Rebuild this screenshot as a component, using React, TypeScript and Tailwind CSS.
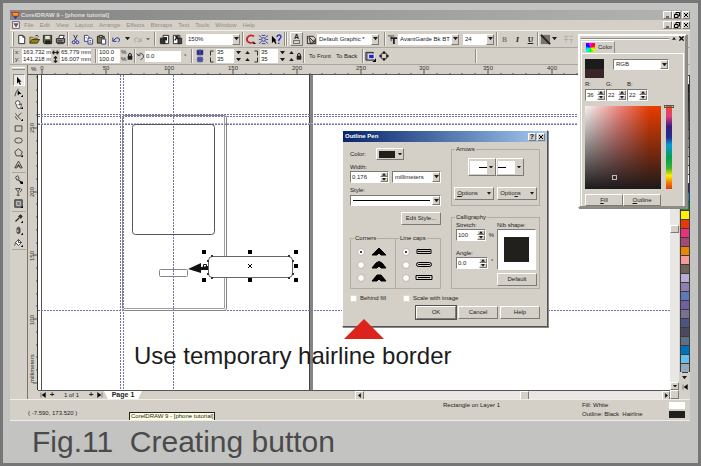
import { useState } from "react";
import type { ReactNode } from "react";
import clsx from "clsx";

const menus = ["File", "Edit", "View", "Layout", "Arrange", "Effects", "Bitmaps", "Text", "Tools", "Window", "Help"];

const palette = [
  "#ffffff", "#1b1b1b", "#262626", "#343434", "#474747", "#5c5c5c", "#757575", "#8f8f8f", "#ababab", "#c6c6c6", "#e2e2e2",
  "#ffffff", "#2b1f6e", "#2b7fc0", "#128a43", "#fff100", "#e23a08", "#ec2f7b", "#a14a78", "#ee8300", "#f39b96", "#6f6259",
  "#b9add4", "#8f80b4", "#6078b8", "#71609f", "#7b6f96", "#4a5680", "#4c4860", "#5f6f88", "#0072bc", "#62bdf0", "#93abba",
];

const raised = "border border-t-white border-l-white border-r-[#7d7a74] border-b-[#7d7a74] bg-[#d4d0c8]";
const sunken = "border border-t-[#7d7a74] border-l-[#7d7a74] border-r-white border-b-white bg-white";

function Icon({ children, className = "size-[11px]" }: { children: ReactNode; className?: string }) {
  return (
    <svg viewBox="0 0 12 12" className={clsx("shrink-0", className)} fill="none" stroke="#222" strokeWidth="1" aria-hidden="true">
      {children}
    </svg>
  );
}

function Tri({ up = false, className = "w-[5px]" }: { up?: boolean; className?: string }) {
  return (
    <svg viewBox="0 0 6 4" className={clsx("shrink-0", className)} aria-hidden="true">
      <path d={up ? "M0 4L3 0L6 4Z" : "M0 0H6L3 4Z"} fill="currentColor" />
    </svg>
  );
}

function ToolButton({ label, children }: { label: string; children: ReactNode }) {
  return (
    <button aria-label={label} className="flex h-[13px] w-[13px] shrink-0 items-center justify-center">
      {children}
    </button>
  );
}

function Divider() {
  return <span className="h-[14px] w-[2px] shrink-0 border-l border-[#8f8c86] bg-[#f3f1ec]" />;
}

type ComboProps = { label: string; options: string[]; className?: string; flat?: boolean };

function Combo({ label, options, className, flat }: ComboProps) {
  return (
    <div className={clsx("relative shrink-0", flat ? "bg-white" : sunken, className)}>
      <select aria-label={label} className="block h-full w-full appearance-none truncate pl-[2px] pr-[8px] outline-none">
        {options.map((option) => (
          <option key={option}>{option}</option>
        ))}
      </select>
      <span className={clsx("pointer-events-none absolute inset-y-0 right-0 flex w-[8px] items-center justify-center", raised)}>
        <Tri />
      </span>
    </div>
  );
}

function Spinner({ id, value, className }: { id: string; value: string; className?: string }) {
  return (
    <div className={clsx("flex h-[12px]", sunken, className)}>
      <input id={id} defaultValue={value} className="w-0 min-w-0 flex-1 pl-px outline-none" />
      <span className="flex w-[8px] flex-col">
        <button aria-label={`Increase ${id}`} className={clsx("flex flex-1 items-center justify-center", raised)}>
          <Tri up className="w-[4px]" />
        </button>
        <button aria-label={`Decrease ${id}`} className={clsx("flex flex-1 items-center justify-center", raised)}>
          <Tri className="w-[4px]" />
        </button>
      </span>
    </div>
  );
}

function WindowButtons() {
  return (
    <div className="ml-auto flex">
      <button aria-label="Minimize" className={clsx("flex h-[8px] w-[9px] items-center justify-center", raised)}>
        <Icon className="size-[6px]">
          <path d="M2 10H8" stroke="#000" strokeWidth="2" />
        </Icon>
      </button>
      <button aria-label="Restore" className={clsx("flex h-[8px] w-[9px] items-center justify-center", raised)}>
        <Icon className="size-[6px]">
          <path d="M4 4V1H11V8H8M1 5H8V11H1Z" stroke="#000" strokeWidth="2" />
        </Icon>
      </button>
      <button aria-label="Close" className={clsx("ml-px flex h-[8px] w-[8px] items-center justify-center", raised)}>
        <Icon className="size-[6px]">
          <path d="M2 2L10 10M10 2L2 10" stroke="#000" strokeWidth="2" />
        </Icon>
      </button>
    </div>
  );
}

function StandardBar() {
  return (
    <div className="flex h-[18px] items-center border-t border-b border-t-[#f3f1ec] border-b-[#aaa79f] pl-[2px]">
      <span className="mr-px h-[14px] w-[2px] border-x border-l-white border-r-[#8f8c86]" />
      <ToolButton label="New">
        <Icon>
          <path d="M3 1.500H7.500L9.500 3.500V10.500H3Z" fill="#fff" />
          <path d="M7.500 1.500V3.500H9.500" />
        </Icon>
      </ToolButton>
      <ToolButton label="Open">
        <Icon>
          <path d="M1 10V3.500H4L5 4.500H9V6" fill="#d8cf5a" stroke="#5a5418" />
          <path d="M1 10L3 6H11.500L9 10Z" fill="#8b8420" stroke="#3c3810" />
          <path d="M7 2Q9 0.500 10.500 3" />
        </Icon>
      </ToolButton>
      <ToolButton label="Save">
        <Icon>
          <path d="M1.500 1.500H10.500V10.500H2.500L1.500 9.500Z" fill="#5f6438" />
          <path d="M3.500 2H8.500V5.500H3.500Z" fill="#e6e4d8" stroke="none" />
          <path d="M4 7.500H9V10.500H4Z" fill="#222" />
        </Icon>
      </ToolButton>
      <ToolButton label="Print">
        <Icon>
          <path d="M4 5L5 1.500H10L9 5" fill="#fff" />
          <path d="M1.500 5H10.500V9.500H1.500Z" fill="#8d8b85" />
          <path d="M2.500 10.500H9.500M3 7.500H8" />
        </Icon>
      </ToolButton>
      <Divider />
      <ToolButton label="Cut">
        <Icon>
          <path d="M4 1L7 7M8 1L5 7" stroke="#26265e" />
          <circle cx="4" cy="9" r="1.600" stroke="#26269a" />
          <circle cx="8" cy="9" r="1.600" stroke="#26269a" />
        </Icon>
      </ToolButton>
      <ToolButton label="Copy">
        <Icon>
          <path d="M1.500 1.500H5L6.500 3V8H1.500Z" fill="#fff" stroke="#333a7c" />
          <path d="M5.500 4.500H9L10.500 6V11H5.500Z" fill="#fff" stroke="#333a7c" />
          <path d="M7 7H9M7 9H9M3 4H4" stroke="#333a7c" />
        </Icon>
      </ToolButton>
      <ToolButton label="Paste">
        <Icon>
          <path d="M1.500 2.500H9V10H1.500Z" fill="#7b7738" />
          <path d="M3.500 1.500H7V3.500H3.500Z" fill="#ddd" />
          <path d="M6 5.500H10.500V11H6Z" fill="#fff" stroke="#333a7c" />
        </Icon>
      </ToolButton>
      <Divider />
      <ToolButton label="Undo">
        <Icon>
          <path d="M2 4V8H6" stroke="#26268a" />
          <path d="M2.500 7.500Q6 2.500 9 5Q10 7 8 9" stroke="#26268a" />
        </Icon>
      </ToolButton>
      <button aria-label="Undo history" className="flex w-[8px] justify-center">
        <Tri />
      </button>
      <ToolButton label="Redo">
        <Icon>
          <path d="M10 4V8H6" stroke="#a5a29b" />
          <path d="M9.500 7.500Q6 2.500 3 5Q2 7 4 9" stroke="#a5a29b" />
        </Icon>
      </ToolButton>
      <button aria-label="Redo history" className="flex w-[8px] justify-center text-[#77746e]">
        <Tri className="w-[4px]" />
      </button>
      <span className="ml-[2px] mr-[2px] flex">
        <Divider />
      </span>
      <ToolButton label="Import">
        <Icon>
          <path d="M4.500 1.500H10.500V10.500H4.500Z" fill="#fff" />
          <path d="M1.500 4.500H6.500V10.500H1.500Z" fill="#333" />
          <path d="M5 4H8V7M8 4L5 7" strokeWidth="1.500" />
        </Icon>
      </ToolButton>
      <ToolButton label="Export">
        <Icon>
          <path d="M1.500 1.500H8.500V10.500H1.500Z" fill="#fff" />
          <path d="M6.500 4.500H10.500V10.500H6.500Z" fill="#444" />
          <path d="M3 7L6 3M3.500 3H6.500V6" strokeWidth="1.500" />
        </Icon>
      </ToolButton>
      <Combo flat label="Zoom level" options={["150%", "100%", "200%"]} className="ml-[2px] mr-[2px] h-[11px] w-[54px]" />
      <Divider />
      <ToolButton label="Application launcher">
        <Icon>
          <path d="M10 2.500Q5 0 2.500 4Q1 8 5 9.500Q7 10 9 9" stroke="#c8252c" strokeWidth="2" />
          <path d="M9 8L12 11H9Z" fill="#000" stroke="none" />
        </Icon>
      </ToolButton>
      <ToolButton label="Corel Online">
        <Icon>
          <circle cx="6" cy="6" r="2" stroke="#2a3aa0" />
          <path d="M1 1.500L4 4M11 1.500L8 4M1 10.500L4 8M11 10.500L8 8M1 6H3M9 6H11M4 1.500H8M4 10.500H8" stroke="#2a3aa0" />
        </Icon>
      </ToolButton>
      <ToolButton label="What's this">
        <Icon>
          <path d="M1 2V10L3 8L5 11L6 10L4.500 7H6Z" fill="#000" stroke="none" />
          <path d="M6.500 3.500Q7 1 9 1Q11.500 1.500 10.500 4L8.500 6.500V8M8.500 9.500V11" stroke="#2a2ac0" strokeWidth="1.500" />
        </Icon>
      </ToolButton>
      <span className="ml-px mr-[2px] flex">
        <Divider />
        <Divider />
      </span>
      <button aria-label="Artistic text" className={clsx("mr-[3px] flex h-[14px] w-[13px] flex-col items-center text-[7px] font-bold leading-[7px]", raised)}>
        A
        <span className="h-[4px] w-[7px] border border-[#77746e]" />
      </button>
      <Icon>
        <path d="M1.500 2V10.500H6M3 2.500H8L10.500 5V10.500H5Z" />
        <path d="M4 4L9 9V6M9 9H6" />
      </Icon>
      <Combo flat label="Style list" options={["Default Graphic *"]} className="mr-[5px] h-[11px] w-[62px]" />
      <Divider />
      <Icon className="ml-px size-[11px]">
        <path d="M1 2H8M4.500 2V8" strokeWidth="2" stroke="#888" />
        <path d="M4 4.500H11M7.500 4.500V11" strokeWidth="2" />
      </Icon>
      <Combo flat label="Font list" options={["AvantGarde Bk BT", "Arial"]} className="mr-[4px] h-[11px] w-[61px]" />
      <Combo flat label="Font size" options={["24", "36"]} className="mr-[2px] h-[11px] w-[31px]" />
      <Divider />
      <button className="w-[13px] text-center font-serif text-[8px] font-bold text-[#85827b]">B</button>
      <button className="w-[13px] text-center font-serif text-[8px] font-bold italic">I</button>
      <button className="w-[13px] text-center font-serif text-[8px] font-bold underline">U</button>
      <Divider />
      <ToolButton label="Text alignment">
        <Icon>
          <path d="M1 1H11V11H1Z" fill="#77746e" stroke="none" />
          <path d="M1 1L11 11" strokeWidth="2" />
        </Icon>
      </ToolButton>
      <Tri />
      <span className="ml-[6px]">
        <Icon>
          <path d="M1 2.500H6M3.500 2.500V9M7 2.500H11M7 6H11M1 6H6M9 6V10" stroke="#b0ada6" />
        </Icon>
      </span>
    </div>
  );
}

function PairInput({ label, value, width }: { label: string; value: string; width: string }) {
  return <input aria-label={label} defaultValue={value} className={clsx("h-[7px] bg-white pl-px leading-[7px] outline-none", width)} />;
}

function CornerRow({ a, b, name }: { a: string; b: string; name: string }) {
  return (
    <div className="flex h-[7px] items-center">
      <Icon className="size-[6px]">
        <path d={a} stroke="#333" strokeWidth="2" />
      </Icon>
      <PairInput label={`${name} left corner`} value="35" width="ml-px w-[18px]" />
      <span className="ml-[2px] mr-[3px] flex gap-[4px]">
        <Tri />
        <Tri up />
      </span>
      <Icon className="size-[6px]">
        <path d={b} stroke="#333" strokeWidth="2" />
      </Icon>
      <PairInput label={`${name} right corner`} value="35" width="ml-px w-[18px]" />
      <span className="ml-[2px] flex gap-[4px]">
        <Tri />
        <Tri up />
      </span>
    </div>
  );
}

function Lock() {
  return (
    <Icon className="size-[8px]">
      <path d="M4 6V3Q6 1 8 3V6" strokeWidth="1.500" />
      <path d="M3 6H9V11H3Z" fill="#222" />
    </Icon>
  );
}

function PropertyBar() {
  return (
    <div className="flex h-[17px] items-center border-b border-[#aaa79f] pl-[2px]">
      <span className="mr-px h-[14px] w-[2px] border-x border-l-white border-r-[#8f8c86]" />
      <div className="grid w-[7px] leading-[7px]">
        <span>x:</span>
        <span>y:</span>
      </div>
      <div className="grid">
        <PairInput label="x position" value="163.732 mm" width="w-[29px]" />
        <PairInput label="y position" value="141.218 mm" width="w-[29px]" />
      </div>
      <div className="grid w-[9px] justify-items-center">
        <Icon className="size-[7px]">
          <path d="M1 6H11M4 3L1 6L4 9M8 3L11 6L8 9" strokeWidth="2" />
        </Icon>
        <Icon className="size-[7px]">
          <path d="M6 1V11M3 4L6 1L9 4M3 8L6 11L9 8" strokeWidth="2" />
        </Icon>
      </div>
      <div className="mr-[4px] grid">
        <PairInput label="Object width" value="65.779 mm" width="w-[31px]" />
        <PairInput label="Object height" value="16.007 mm" width="w-[31px]" />
      </div>
      <Divider />
      <div className="ml-px grid">
        <PairInput label="Horizontal scale" value="100.0" width="w-[22px]" />
        <PairInput label="Vertical scale" value="100.0" width="w-[22px]" />
      </div>
      <div className="grid w-[6px] pl-px leading-[7px]">
        <span>%</span>
        <span>%</span>
      </div>
      <Lock />
      <Divider />
      <Icon className="size-[9px]">
        <path d="M3 4Q6 0 9 3Q12 8 6 10M1 2L3 5L6 4" />
      </Icon>
      <input aria-label="Rotation" defaultValue="0.0" className="h-[11px] w-[36px] bg-white pl-px outline-none" />
      <span className="w-[10px] pl-[3px]">°</span>
      <Divider />
      <div className="ml-[2px] mr-[4px] grid">
        <Icon className="h-[7px] w-[10px]">
          <path d="M1 2H5V10H1ZM7 2H11V10H7Z" fill="#26269a" stroke="#26268a" />
          <path d="M6 0V12" />
        </Icon>
        <Icon className="h-[7px] w-[10px]">
          <path d="M0 6H12M2 2H10V5H2ZM2 7H10V10H2Z" fill="#6a6ab0" stroke="#26268a" />
        </Icon>
      </div>
      <div className="mr-px grid">
        <CornerRow name="Top" a="M3 11V2H9" b="M3 2H9V11" />
        <CornerRow name="Bottom" a="M3 1V10H9" b="M3 10H9V1" />
      </div>
      <Lock />
      <Divider />
      <button className="ml-[4px] whitespace-nowrap">To Front</button>
      <button className="ml-[5px] mr-[5px] whitespace-nowrap">To Back</button>
      <Divider />
      <ToolButton label="Wrap text">
        <Icon>
          <path d="M1 1.500H9V10H1Z" fill="#8d9097" />
          <path d="M4 3.500H10V8.500H4Z" fill="#2222c8" stroke="#fff" />
          <path d="M12 8V12H8Z" fill="#000" stroke="none" />
        </Icon>
      </ToolButton>
      <ToolButton label="Convert to curves">
        <Icon className="size-[10px]">
          <circle cx="6" cy="6" r="4" />
          <path d="M5 1H7V3H5ZM5 9H7V11H5ZM1 5H3V7H1ZM9 5H11V7H9Z" fill="#222" />
        </Icon>
      </ToolButton>
      <span className="ml-[85px] flex">
        <Divider />
      </span>
    </div>
  );
}

const flyout = <path d="M12 9V12H9Z" fill="#000" stroke="none" />;

const tools: { name: string; art: ReactNode; group?: boolean }[] = [
  { name: "Pick", art: <path d="M4 1V10L6 8L8 12L9 11L7.500 7.500H10Z" fill="#000" stroke="none" /> },
  { name: "Shape", art: <><path d="M1 11Q3 3 6 1" /><path d="M5 3L10 8L7 8L5 10Z" fill="#000" stroke="none" />{flyout}</> },
  { name: "Zoom", art: <><circle cx="5" cy="4" r="3" fill="#fff" /><path d="M3 7L5 11H9L10 5L7 7" fill="#fff" />{flyout}</> },
  { name: "Freehand", art: <><path d="M2 2L5 6L10 1M5 6L9 10M2 6Q2 9 5 10" />{flyout}</> },
  { name: "Rectangle", art: <path d="M1.500 2.500H10.500V9.500H1.500Z" /> },
  { name: "Ellipse", art: <ellipse cx="6" cy="6" rx="5" ry="3.500" /> },
  { name: "Polygon", art: <><path d="M6 1L11 5L9 10.500H3L1 5Z" />{flyout}</> },
  { name: "Text", art: <path d="M1 10.500L6 1.500L11 10.500H8L6 6L4 10.500ZM3 8H9" /> },
  { name: "Interactive fill", group: true, art: <><path d="M2 3L5 1L7 5L4 7ZM5 7Q8 6 10 10" /><path d="M7 8L12 9V12H9Z" fill="#000" stroke="none" /></> },
  { name: "Transparency", art: <path d="M2 2H8L5.500 6V11M3.500 11H7.500M9 2Q12 4 8 7M2 2L5 6" /> },
  { name: "Blend", art: <><path d="M1 1H11V11H1Z" fill="#777" /><path d="M3.500 3.500H8.500V8.500H3.500Z" stroke="#ddd" />{flyout}</> },
  { name: "Eyedropper", group: true, art: <><path d="M2 10L7 5" strokeWidth="1.500" /><path d="M6 3L9 6L11 3L9 1Z" fill="#333" />{flyout}</> },
  { name: "Outline", art: <><path d="M4 3Q6 0 8 3V9Q6 11 4 9Z" fill="#666" /><path d="M5 5V8" stroke="#fff" />{flyout}</> },
  { name: "Fill", art: <><path d="M2 6L6 2L10 6L6 10Z" fill="#fff" /><path d="M6 2V6M2 6Q1 9 1 10M10 6H6" />{flyout}</> },
];

function Toolbox() {
  return (
    <div className="w-[18px] shrink-0 border-r border-[#77746e] pt-[2px]">
      <div className="mx-[2px] mb-[2px] h-[3px] border-y border-t-white border-b-[#8f8c86]" />
      <div className="flex flex-col items-center pt-[2px]">
        {tools.map((tool, i) => (
          <div key={tool.name} className={clsx("flex w-[14px] justify-center", tool.group && "mt-[2px] border-t border-[#aaa79f]")}>
            <button
              aria-label={tool.name}
              className={clsx("flex h-[12px] w-[12px] items-center justify-center", i === 0 && "border border-t-[#8f8c86] border-l-[#8f8c86] border-r-white border-b-white bg-[#ebe9e5]")}
            >
              <Icon className="size-[9px]">{tool.art}</Icon>
            </button>
          </div>
        ))}
        <div className="mt-px w-[14px] border-t border-[#aaa79f]" />
      </div>
    </div>
  );
}

function TopRuler() {
  return (
    <svg className="h-[10px] w-full bg-[#d4d0c8]" fontSize="6" aria-hidden="true">
      {Array.from({ length: 50 }, (_, i) => {
        const x = Math.round(4 + i * 12.74);
        return <path key={i} d={i % 5 === 0 ? `M${x} 5V10` : `M${x} 8V10`} stroke="#555" />;
      })}
      {Array.from({ length: 10 }, (_, i) => (
        <text key={i} x={Math.round(4 + i * 63.7)} y="5" textAnchor="middle" fill="#333">
          {i * 50}
        </text>
      ))}
      <path d="M0 9.500H2000" stroke="#555" />
    </svg>
  );
}

function SideRuler() {
  return (
    <svg className="w-[10px] shrink-0 bg-[#d4d0c8]" fontSize="6" aria-hidden="true">
      {Array.from({ length: 25 }, (_, i) => {
        const y = Math.round(2 + i * 12.74);
        return <path key={i} d={i % 5 === 4 ? `M5 ${y}H10` : `M8 ${y}H10`} stroke="#555" />;
      })}
      {[250, 200, 150, 100].map((n, i) => (
        <text key={n} transform={`translate(6 ${53 + i * 64}) rotate(-90)`} textAnchor="middle" fill="#333">
          {n}
        </text>
      ))}
      <text transform="translate(6 308) rotate(-90)" fill="#333">
        millimeters
      </text>
      <path d="M9.500 0V2000" stroke="#333" />
    </svg>
  );
}

function Drawing() {
  return (
    <svg className="absolute inset-0 h-full w-full" fill="none" stroke="#85858c" aria-hidden="true">
      <path d="M3.500 0V2000" stroke="#555" />
      <path d="M273 0V2000" stroke="#858588" strokeWidth="4" />
      <path d="M271.500 0V2000" stroke="#444" />
      <g stroke="#7673a0" strokeDasharray="2 1">
        <path d="M0 39.500H2000M0 41.500H2000M0 49.500H2000" />
        <path d="M0 235.500H2000M82.500 0V2000M85.500 0V2000M135.500 0V2000" />
      </g>
      <path d="M0 48.500H2000" stroke="#b3b0cf" strokeDasharray="2 1" />
      <rect x="84.500" y="40.500" width="104" height="195" rx="2" />
      <path d="M186.500 41V233.500H86" stroke="#9c9ca4" />
      <rect x="94.500" y="49.500" width="82" height="110" rx="3" stroke="#555" />
      <rect x="121.500" y="194.500" width="28" height="7" rx="1" />
      <rect x="170.500" y="181.500" width="84" height="21" rx="4" fill="#fff" stroke="#666" />
      <g fill="#333" stroke="none">
        <path d="M173 180h2v2h-2zM250 180h2v2h-2zM173 202h2v2h-2zM250 202h2v2h-2zM169 185h2v2h-2zM169 198h2v2h-2zM254 185h2v2h-2zM254 198h2v2h-2z" />
        <path d="M164 175h4v4h-4zM210 175h4v4h-4zM256 175h4v4h-4zM164 203h4v4h-4zM210 203h4v4h-4zM256 203h4v4h-4zM256 189h4v4h-4z" fill="#000" />
        <path d="M150 194L163 188V192L170 191V195L163 195V198Z" fill="#111" />
      </g>
      <path d="M165.500 189.500h3v4h-3z" stroke="#111" />
      <path d="M210 189L214 193M214 189L210 193" stroke="#000" />
    </svg>
  );
}

function Radio({ name, checked, label, art }: { name: string; checked?: boolean; label: string; art: ReactNode }) {
  return (
    <label className="flex h-[13px] items-center gap-[6px]">
      <input
        type="radio"
        name={name}
        aria-label={label}
        defaultChecked={checked}
        className="size-[6px] appearance-none rounded-full border-2 border-white bg-white outline outline-[#c2bfb8] checked:bg-black"
      />
      <svg viewBox="0 0 18 9" className="h-[9px] w-[18px]" fill="none" stroke="#000" aria-hidden="true">
        {art}
      </svg>
    </label>
  );
}

const button = clsx("flex items-center justify-center whitespace-nowrap", raised);

function OutlinePen({ onClose }: { onClose: () => void }) {
  return (
    <div role="dialog" aria-label="Outline Pen" className="absolute left-[304px] top-[55px] w-[206px] border border-t-white border-l-white border-r-[#55534f] border-b-[#55534f] bg-[#d4d0c8] pb-[7px] shadow-[1px_1px_0_#888]">
      <div className="flex h-[11px] items-center bg-linear-to-r from-[#0a246a] to-[#a6caf0] px-[2px] font-bold text-white">
        Outline Pen
        <button aria-label="Help" className={clsx("ml-auto flex h-[8px] w-[8px] items-center justify-center text-[7px] text-black", raised)}>?</button>
        <button aria-label="Close" onClick={onClose} className={clsx("ml-px flex h-[8px] w-[8px] items-center justify-center", raised)}>
          <Icon className="size-[6px]">
            <path d="M2 2L10 10M10 2L2 10" stroke="#000" strokeWidth="2" />
          </Icon>
        </button>
      </div>

      <div className="flex justify-between px-[7px] pt-[3px]">
        <div className="flex w-[91px] flex-col pt-[3px]">
          <div className="flex h-[12px] items-center">
            <span className="w-[26px]">Color:</span>
            <button aria-label="Outline color" className={clsx(button, "h-[12px] w-[28px] gap-[3px]")}>
              <span className="h-[7px] w-[16px] bg-[#22201c]" />
              <Tri className="w-[4px]" />
            </button>
          </div>
          <label htmlFor="width" className="mt-[3px] h-[8px]">Width:</label>
          <div className="flex justify-between">
            <Spinner id="width" value="0.176" className="w-[39px]" />
            <Combo label="Units" options={["millimeters", "inches"]} className="h-[12px] w-[49px]" />
          </div>
          <span className="mt-[3px] h-[9px]">Style:</span>
          <button aria-label="Line style" className={clsx("flex h-[11px] items-center", sunken)}>
            <span className="mx-[2px] h-px flex-1 bg-black" />
            <span className={clsx("flex h-full w-[8px] items-center justify-center", raised)}>
              <Tri />
            </span>
          </button>
          <button className={clsx(button, "mt-[6px] h-[13px] w-[40px] self-end")}>Edit Style...</button>
          <div className="mt-[9px] flex h-[55px]">
            <fieldset className="w-[46px] border border-[#b0ada6] pl-[7px] pt-[3px]">
              <legend className="-ml-[4px] px-px leading-[8px]">Corners</legend>
              <Radio name="corners" label="Miter" checked art={<path d="M2 8L9 1L16 8H11L9 6L7 8Z" fill="#000" />} />
              <Radio name="corners" label="Round" art={<path d="M2 8L6 3Q9 0 12 3L16 8H11L9 6L7 8Z" fill="#000" />} />
              <Radio name="corners" label="Bevel" art={<path d="M2 8L7 2H11L16 8H11L9 6L7 8Z" fill="#000" />} />
            </fieldset>
            <fieldset className="-ml-px w-[46px] border border-[#b0ada6] pl-[7px] pt-[3px]">
              <legend className="-ml-[4px] whitespace-nowrap px-px leading-[8px]">Line caps</legend>
              <Radio name="caps" label="Butt" checked art={<path d="M2 2.500H16V6.500H2ZM3 4.500H15" />} />
              <Radio name="caps" label="Rounded" art={<><rect x="1.500" y="2.500" width="15" height="4" rx="2" /><path d="M3 4.500H15" /></>} />
              <Radio name="caps" label="Square" art={<path d="M1 2.500H17V6.500H1ZM3 4.500H15" />} />
            </fieldset>
          </div>
        </div>

        <div className="w-[89px]">
          <fieldset className="h-[61px] border border-[#b0ada6] px-[2px]">
            <legend className="ml-px px-px leading-[8px]">Arrows</legend>
            <div className="mt-[5px] flex justify-center">
              <button aria-label="Start arrowhead" className={clsx(button, "h-[18px] w-[28px] gap-[2px]")}>
                <svg viewBox="0 0 17 13" className="w-[17px] bg-white">
                  <path d="M9 6.500H17" stroke="#000" />
                </svg>
                <Tri className="w-[4px]" />
              </button>
              <button aria-label="End arrowhead" className={clsx(button, "h-[18px] w-[28px] gap-[2px]")}>
                <svg viewBox="0 0 17 13" className="w-[17px] bg-white">
                  <path d="M0 6.500H8" stroke="#000" />
                </svg>
                <Tri className="w-[4px]" />
              </button>
            </div>
            <div className="mt-[11px] flex justify-between">
              <button className={clsx(button, "h-[13px] w-[40px] gap-[9px]")}>
                <span><u>O</u>ptions</span>
                <Tri className="w-[4px]" />
              </button>
              <button className={clsx(button, "h-[13px] w-[40px] gap-[9px]")}>
                <span>Optio<u>n</u>s</span>
                <Tri className="w-[4px]" />
              </button>
            </div>
          </fieldset>
          <fieldset className="mt-[7px] h-[76px] border border-[#b0ada6] pl-[4px] pr-[2px]">
            <legend className="-ml-px px-px leading-[8px]">Calligraphy</legend>
            <div className="flex justify-between">
              <div className="w-[38px]">
                <label htmlFor="stretch" className="block h-[8px] leading-[8px]">Stretch:</label>
                <div className="flex items-center gap-[3px]">
                  <Spinner id="stretch" value="100" className="w-[32px]" />%
                </div>
                <label htmlFor="angle" className="mt-[8px] block h-[8px] leading-[8px]">Angle:</label>
                <div className="flex gap-[3px]">
                  <Spinner id="angle" value="0.0" className="w-[32px]" />°
                </div>
              </div>
              <div className="w-[40px]">
                <div className="h-[8px] whitespace-nowrap leading-[8px]">Nib shape:</div>
                <div className={clsx("flex h-[41px] w-[39px] items-center justify-center", sunken)}>
                  <div className="size-[25px] bg-[#22201c]" />
                </div>
                <button className={clsx(button, "mt-[3px] h-[13px] w-[40px]")}>Default</button>
              </div>
            </div>
          </fieldset>
        </div>
      </div>

      <div className="flex h-[13px] items-end px-[7px]">
        <label className="flex w-[53px] items-center gap-[3px] whitespace-nowrap leading-[8px]">
          <input type="checkbox" className="size-[7px] appearance-none border border-[#dddad4] bg-white checked:bg-black" />
          Behind fill
        </label>
        <label className="flex items-center gap-[3px] whitespace-nowrap leading-[8px]">
          <input type="checkbox" className="size-[7px] appearance-none border border-[#dddad4] bg-white checked:bg-black" />
          Scale with image
        </label>
      </div>
      <div className="mt-[4px] flex justify-end gap-[2px] px-[7px]">
        <button onClick={onClose} className={clsx(button, "h-[13px] w-[40px] outline outline-[#55534f]")}>OK</button>
        <button onClick={onClose} className={clsx(button, "h-[13px] w-[40px]")}>Cancel</button>
        <button className={clsx(button, "h-[13px] w-[40px]")}>Help</button>
      </div>
    </div>
  );
}

function ColorDocker() {
  return (
    <div className="absolute right-[3px] top-[24px] w-[109px] border-2 border-t-white border-l-white border-r-[#8f8c86] border-b-[#8f8c86] bg-[#d4d0c8] px-px shadow-[1px_1px_0_#888]">
      <div className="flex h-[5px] items-center gap-[3px]">
        <span className="h-[2px] flex-1 border-t border-[#8f8c86] bg-white" />
        <Tri up className="w-[4px]" />
        <Icon className="size-[5px]">
          <path d="M1 1L11 11M11 1L1 11" stroke="#000" strokeWidth="3" />
        </Icon>
      </div>
      <div className="flex h-[12px] w-[34px] items-center gap-[3px] border-r border-l border-t border-t-white border-l-white border-r-[#8f8c86] pl-[4px]">
        <span className="size-[9px] bg-[conic-gradient(#f0f,#f00,#ff0,#0f0,#0ff,#00f,#f0f)]" />
        Color
      </div>
      <div className="border-l border-r border-white border-t px-[3px] pt-[5px]">
        <div className="flex justify-between pr-[11px]">
          <div className="h-[19px] w-[19px] border-b-[9px] border-[#3a2529] bg-[#1b1b1b]" />
          <Combo label="Color model" options={["RGB", "CMYK", "HSB"]} className="h-[11px] w-[56px]" />
        </div>
        <div className="mt-[2px] flex">
          {[["R", "36"], ["G", "22"], ["B", "22"]].map(([channel, value]) => (
            <div key={channel} className="w-[21px]">
              <label htmlFor={channel} className="block h-[9px] leading-[9px]">{channel}:</label>
              <Spinner id={channel} value={value} className="w-[21px]" />
            </div>
          ))}
        </div>
        <div className="mt-[5px] flex gap-[5px]">
          <div className="relative h-[83px] w-[76px] bg-[linear-gradient(to_bottom,transparent,#1c1a1a),linear-gradient(to_right,#f4f4f4,#f0847c_45%,#e83c00_85%)]">
            <span className="absolute left-[27px] top-[69px] size-[5px] border border-[#bbb]" />
          </div>
          <div className="relative h-[83px] w-[6px] bg-[linear-gradient(to_bottom,#f04a20,#e0407a_12%,#3c1a80_25%,#203090_38%,#0a9ad8_47%,#00a050_62%,#40b030_75%,#fff000_84%,#f08000_92%,#e03a08)]">
            <span className="absolute -left-[2px] -top-px h-[3px] w-[10px] border border-[#555]" />
          </div>
        </div>
        <div className="mt-[5px] flex">
          <button className={clsx(button, "h-[12px] w-[38px]")}><span><u>F</u>ill</span></button>
          <button className={clsx(button, "h-[12px] w-[38px]")}><span><u>O</u>utline</span></button>
        </div>
      </div>
    </div>
  );
}

function PageBar() {
  return (
    <div className="flex h-[9px] items-center border-t border-[#555]">
      <div className="flex w-[317px] shrink-0 items-center pl-[2px]">
        <button aria-label="First page" className="flex w-[6px]">
          <Icon className="size-[6px]">
            <path d="M2 1V11M11 1L4 6L11 11Z" fill="#000" />
          </Icon>
        </button>
        <button className="w-[12px] text-center text-[8px] font-bold leading-[8px]">+</button>
        <span className="w-[27px] text-center">1 of 1</span>
        <button className="w-[12px] text-center text-[8px] font-bold leading-[8px]">+</button>
        <button aria-label="Last page" className="flex w-[7px]">
          <Icon className="size-[6px]">
            <path d="M10 1V11M1 1L8 6L1 11Z" fill="#000" />
          </Icon>
        </button>
        <button className="h-[8px] w-[38px] bg-white text-center text-[7px] font-bold leading-[8px] [clip-path:polygon(0_0,100%_0,90%_100%,10%_100%)]">
          Page 1
        </button>
      </div>
      <div className="flex h-[9px] flex-1 justify-between bg-[#e9e7e3]">
        <button aria-label="Scroll left" className={clsx(button, "w-[9px]")}>
          <Icon className="size-[5px]"><path d="M9 1L3 6L9 11Z" fill="#000" /></Icon>
        </button>
        <span className={clsx("ml-[23px] w-[9px]", raised)} />
        <button aria-label="Scroll right" className={clsx(button, "w-[8px]")}>
          <Icon className="size-[5px]"><path d="M3 1L9 6L3 11Z" fill="#000" /></Icon>
        </button>
      </div>
    </div>
  );
}

export default function App() {
  const [dialogOpen, setDialogOpen] = useState(true);

  return (
    <div className="flex min-h-screen flex-col border-[3px] border-[#767676] bg-[#c3c3c1] pl-[7px] pr-[8px] pt-[7px] font-['Liberation_Sans',Arial,sans-serif] text-[6px] leading-[9px] text-[#1c1c1c]">
      <div className="relative flex flex-1 flex-col bg-[#d4d0c8]">
        <header className="flex h-[10px] items-center bg-linear-to-r from-[#858585] to-[#b3b3b1] pl-px font-bold text-[#e0ded9]">
          <Icon className="mr-px size-[9px]">
            <path d="M1 2H11L9 7H3Z" fill="#e8a020" stroke="#c02020" />
            <path d="M3 7H9L6 11Z" fill="#2040a0" stroke="none" />
          </Icon>
          CorelDRAW 9 - [phone tutorial]
          <WindowButtons />
        </header>
        <nav className="flex h-[10px] items-center gap-[6px] pl-[2px] text-[#8f8c86]">
          <Icon className="-mr-[2px] size-[8px]">
            <path d="M1 1H11V11H1Z" fill="#fff" />
            <path d="M3 4H9L6 9Z" fill="#d04020" stroke="#2040a0" />
          </Icon>
          {menus.map((menu) => (
            <button key={menu}>{menu}</button>
          ))}
          <WindowButtons />
        </nav>
        <StandardBar />
        <PropertyBar />

        <main className="flex flex-1">
          <Toolbox />
          <div className="flex min-w-0 flex-1 flex-col">
            <div className="flex">
              <span className="w-[10px] shrink-0 border-b border-[#555] pl-[3px]">%</span>
              <TopRuler />
            </div>
            <div className="flex min-h-[300px] flex-1">
              <SideRuler />
              <div className="relative flex-1 bg-white">
                <Drawing />
                <p className="absolute left-[96px] top-[269px] whitespace-nowrap text-[24px] leading-[24px]">
                  Use temporary hairline border
                </p>
                {dialogOpen && <OutlinePen onClose={() => setDialogOpen(false)} />}
                <svg viewBox="0 0 40 20" className="absolute left-[306px] top-[244px] w-[40px]" aria-hidden="true">
                  <path d="M20 0L40 20H0Z" fill="#dc241c" />
                </svg>
              </div>
              <div className="flex w-[9px] shrink-0 flex-col justify-between bg-[#e9e7e3]">
                <span />
                <span className={clsx("h-[8px]", raised)} />
                <button aria-label="Scroll down" className={clsx(button, "h-[8px]")}>
                  <Tri className="w-[4px]" />
                </button>
              </div>
            </div>
            <div className="flex">
              <span className="w-[10px] shrink-0" />
              <div className="flex-1">
                <PageBar />
              </div>
              <span className={clsx("w-[9px] shrink-0", raised)} />
            </div>
          </div>
          <div className="flex w-[11px] shrink-0 flex-col items-center pt-[10px]">
            {palette.map((color, i) => (
              <button key={i} aria-label={`Swatch ${i + 1}`} className="h-[9px] w-[10px] border border-b-0 border-[#3b3b3b]" style={{ backgroundColor: color }} />
            ))}
            <span className="flex flex-1 flex-col items-center gap-[5px] border-t border-[#3b3b3b] pt-[3px]">
              <Tri />
              <Icon className="size-[6px]">
                <path d="M2 1V11M11 1L4 6L11 11Z" fill="#000" />
              </Icon>
            </span>
          </div>
        </main>

        <footer className="flex h-[22px] border-t border-b border-[#efede8] pl-[18px] pr-[5px]">
          <span className="w-[101px] self-end pb-[2px]">( -7.590, 173.520 )</span>
          <span className="self-end whitespace-nowrap border border-b-0 border-[#222] bg-[#ffffe1] px-px leading-[7px]">
            CorelDRAW 9 - [phone tutorial]
          </span>
          <span className="ml-auto w-[139px] pt-px">Rectangle on Layer 1</span>
          <div className="grid w-[103px] content-start pt-px">
            <div className="flex h-[9px] items-center justify-between">
              Fill: White
              <span className="h-[7px] w-[16px] bg-white" />
            </div>
            <div className="flex h-[9px] items-center justify-between">
              Outline: Black&nbsp; Hairline
              <span className="h-[7px] w-[16px] bg-[#22201c]" />
            </div>
          </div>
        </footer>
        <ColorDocker />
      </div>
      <p className="h-[42px] whitespace-pre pl-[22px] text-[30px] leading-[42px] text-[#4a4a4a]">
        {"Fig.11  Creating button"}
      </p>
    </div>
  );
}
